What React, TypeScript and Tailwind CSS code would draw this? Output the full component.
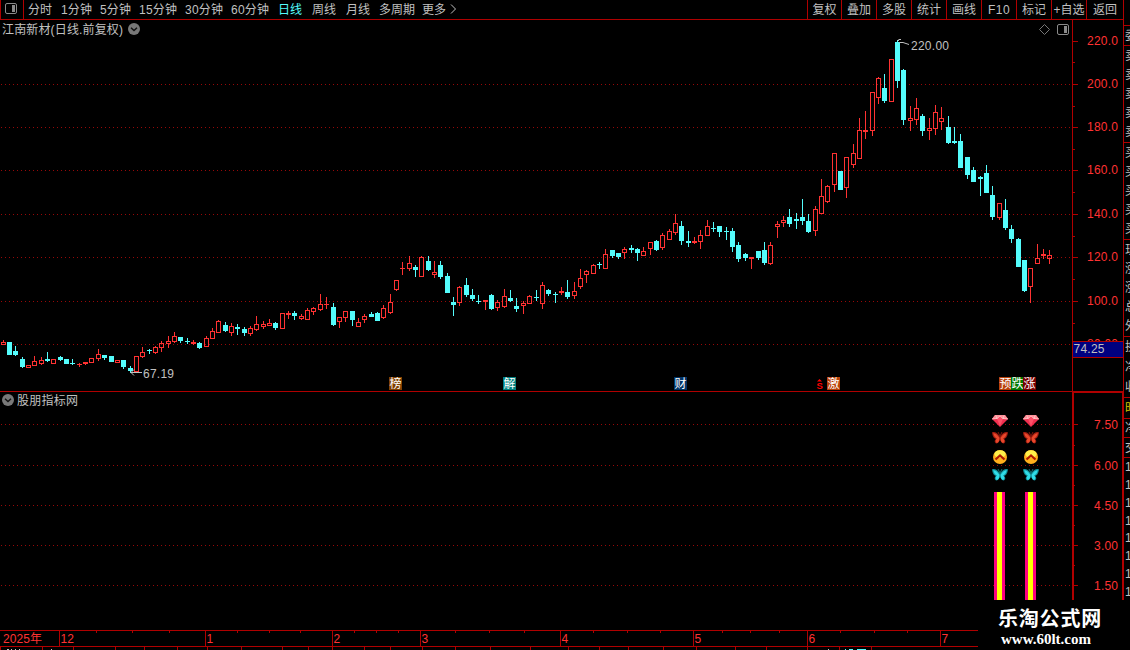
import React from "react";

type Candle = [number, number, number, number, number, 0 | 1];

// [centre x, high, body top, body bottom, low, rising]
const candles: Candle[] = [
  [3,340,342,345,345,1],[9,342,342,355,355,0],[15,346,351,355,356,0],[22,357,359,367,368,0],[28,365,365,368,368,1],
  [34,356,361,366,366,1],[41,357,360,364,365,1],[47,352,359,361,362,0],[53,359,359,364,364,1],[60,356,357,360,361,0],
  [66,359,359,364,364,0],[72,359,363,364,365,0],[79,363,364,365,367,1],[85,362,362,364,365,1],[91,358,358,363,363,1],
  [98,349,354,359,361,1],[104,355,355,358,360,0],[111,356,356,362,362,0],[117,360,360,363,363,1],[123,360,360,367,369,0],
  [130,366,368,371,373,0],[136,356,356,372,372,1],[142,347,352,357,358,1],[149,349,350,351,354,0],[155,346,347,353,354,1],
  [161,341,343,348,352,1],[168,336,341,344,348,1],[174,332,336,342,343,1],[180,337,337,341,343,0],[187,338,341,342,344,0],
  [193,340,342,344,345,1],[199,342,343,348,349,0],[206,336,338,347,347,1],[212,328,331,339,339,1],[218,320,321,333,333,1],
  [225,322,325,331,332,0],[231,323,326,333,336,1],[237,324,327,329,335,0],[244,327,329,333,336,0],[250,326,328,334,336,1],
  [256,316,324,330,331,1],[263,321,324,327,329,1],[269,319,323,326,326,1],[275,322,323,328,330,0],[282,313,313,329,329,1],
  [288,311,313,315,319,1],[294,311,313,316,320,0],[301,314,316,319,320,1],[307,308,310,320,320,1],[313,307,308,312,315,1],
  [320,294,304,310,311,1],[326,297,304,305,309,1],[333,303,307,325,326,0],[339,317,317,322,328,1],[345,311,311,318,322,1],
  [352,311,311,320,326,0],[358,318,322,327,327,1],[364,314,316,320,323,1],[371,312,314,317,317,0],[377,312,313,321,321,0],
  [383,305,308,318,319,1],[390,294,302,313,314,1],[396,280,280,290,291,1],[402,262,268,269,275,1],[409,256,263,269,271,1],
  [415,265,267,270,277,0],[421,256,257,277,277,1],[428,256,261,270,271,0],[434,261,272,275,278,1],[440,261,265,277,279,0],
  [447,273,276,293,293,0],[453,297,302,305,316,0],[459,286,287,303,306,1],[466,278,285,295,297,0],[472,289,295,299,301,0],
  [478,295,301,302,304,0],[485,300,300,302,310,1],[491,294,295,309,310,0],[497,300,302,308,311,1],[504,289,296,307,308,1],
  [510,290,298,301,302,0],[516,298,306,309,312,0],[523,301,303,306,314,1],[529,295,296,304,304,1],[536,290,297,298,301,0],
  [542,282,285,304,309,1],[548,289,290,294,296,0],[555,292,294,295,303,0],[561,287,291,293,295,1],[567,280,292,297,299,0],
  [574,282,291,296,299,1],[580,269,278,287,289,1],[586,270,271,275,283,1],[593,264,265,274,274,1],[599,262,264,265,269,0],
  [605,249,254,269,269,1],[612,250,250,256,258,0],[618,253,253,257,259,0],[624,247,249,253,259,1],[631,245,248,250,253,0],
  [637,248,249,253,261,0],[643,247,251,256,256,1],[650,242,242,249,255,1],[656,240,241,250,251,0],[662,233,235,248,250,1],
  [669,229,231,240,240,1],[675,214,223,233,235,1],[681,221,226,241,245,0],[688,231,241,243,247,0],[694,237,241,243,244,1],
  [700,230,235,242,249,1],[707,220,226,236,236,1],[713,222,228,229,232,0],[719,226,226,232,237,0],[726,227,231,232,240,0],
  [732,228,231,247,252,0],[738,242,245,259,262,0],[745,253,254,258,261,0],[751,257,257,259,269,1],[758,251,251,258,260,0],
  [764,242,250,263,265,0],[770,242,245,264,265,1],[777,221,224,227,238,1],[783,216,220,223,227,1],[789,209,217,224,227,0],
  [796,213,219,221,229,0],[802,199,217,221,225,0],[808,214,221,232,233,0],[815,206,209,231,236,1],[821,179,196,214,214,1],
  [827,185,186,202,203,1],[834,153,153,185,192,1],[840,171,171,190,190,0],[846,157,157,188,198,1],[853,144,153,165,168,1],
  [859,118,130,159,159,1],[865,111,130,132,139,1],[872,92,92,131,136,1],[878,77,78,98,104,1],[884,74,88,101,103,0],
  [891,59,59,102,102,1],[897,40,42,81,88,0],[903,69,70,120,125,0],[910,106,118,121,131,1],[916,98,108,120,125,1],
  [922,114,116,131,136,0],[929,118,128,131,140,1],[935,105,112,129,135,1],[941,107,118,122,130,1],[948,116,127,143,144,0],
  [954,127,141,143,144,0],[960,134,141,168,168,0],[967,157,157,175,179,0],[973,167,170,182,182,0],[980,176,177,179,196,0],
  [986,165,173,193,193,0],[992,186,195,217,220,0],[999,203,203,218,220,1],[1005,199,210,228,230,0],[1011,225,229,239,243,0],
  [1018,238,239,267,267,0],[1024,260,260,291,292,0],[1030,268,268,287,303,1],[1037,244,258,264,264,1],[1043,249,254,256,259,1],
  [1049,250,255,259,264,1],
];

function CandleShape({ c }: { c: Candle }) {
  const [x, high, top, bottom, low, up] = c;
  const color = up ? "#ff3232" : "#54fcfc";
  const solid = !up || bottom - top <= 2;
  return (
    <g fill={color}>
      {high < top && <rect x={x} y={high} width={1} height={top - high} />}
      {low > bottom && <rect x={x} y={bottom} width={1} height={low - bottom} />}
      {solid ? (
        <rect x={x - 2} y={top} width={5} height={bottom - top} />
      ) : (
        <rect x={x - 1.5} y={top + 0.5} width={4} height={bottom - top - 1} fill="none" stroke={color} />
      )}
    </g>
  );
}

const LINE = "#b00000";
const priceLabels: [string, number][] = [
  ["220.0", 41], ["200.0", 84], ["180.0", 127], ["160.0", 170], ["140.0", 214], ["120.0", 257], ["100.0", 301], ["80.00", 344],
];
const priceMinor = [62, 106, 149, 192, 236, 279, 323];
const indicatorLabels: [string, number][] = [["7.50", 424], ["6.00", 465], ["4.50", 505], ["3.00", 545], ["1.50", 585]];
const indicatorMinor = [445, 485, 525, 565];

const badges: [string, number, string][] = [
  ["榜", 389, "#7f3f00"], ["解", 503, "#008080"], ["财", 674, "#003366"], ["激", 827, "#b84008"],
  ["预", 999, "#b84008"], ["跌", 1011, "#007800"], ["涨", 1023, "#780000"],
];

const months: [string, number][] = [["12", 59], ["1", 205], ["2", 332], ["3", 420], ["4", 560], ["5", 693], ["6", 807], ["7", 940]];
const weeks = [96, 132, 169, 237, 269, 300, 354, 376, 398, 455, 489, 524, 593, 627, 660, 722, 750, 779, 840, 874, 907];
const lowerTicks = [0, 42, 73, 115, 144, 177, 207, 241, 282, 308, 332, 364, 390, 422, 455, 490, 530, 568, 599, 628, 663, 696, 735, 766, 807, 839, 871];

const periods: [string, number, number][] = [
  ["分时", 28, 24], ["1分钟", 61, 31], ["5分钟", 100, 31], ["15分钟", 139, 38], ["30分钟", 185, 38], ["60分钟", 231, 38],
  ["日线", 278, 24], ["周线", 312, 24], ["月线", 346, 24], ["多周期", 379, 36], ["更多", 422, 24],
];
const tools: [string, string][] = [
  ["复权", "w-[34px]"], ["叠加", "w-[35px]"], ["多股", "w-[35px]"], ["统计", "w-[35px]"], ["画线", "w-[35px]"],
  ["F10", "w-[35px] tracking-[0.5px]"], ["标记", "w-[35px]"], ["+自选", "w-[35px]"], ["返回", "w-[37px]"],
];

function PanelIcon() {
  return (
    <svg className="block" width="12" height="11" viewBox="0 0 12 11" fill="none">
      <rect x="0.5" y="0.5" width="11" height="10" rx="1.5" stroke="#8a8a8a" />
      <rect x="7" y="2" width="3" height="7" fill="#8a8a8a" />
    </svg>
  );
}

function Chevron() {
  return (
    <svg className="block" width="12" height="12" viewBox="0 0 12 12">
      <circle cx="6" cy="6" r="6" fill="#787878" />
      <path d="M3 4.8 6 7.6 9 4.8" fill="none" stroke="#111" strokeWidth="1.4" />
    </svg>
  );
}

function Butterfly({ x, y, main, dark }: { x: number; y: number; main: string; dark: string }) {
  return (
    <g transform={`translate(${x} ${y})`}>
      <path d="M8 6C5 1 2 .5 0 1.5 .5 4 1 7 4 8 2 9.500 2.500 12 4.500 12.500 6.500 12.500 7.500 10 8 8 8.500 10 9.500 12.500 11.500 12.500 13.500 12 14 9.500 12 8 15 7 15.500 4 16 1.500 14 .5 11 1 8 6Z" fill={dark} />
      <path d="M7.600 7C5 3 3 2 1.200 2.200 2 5 3 6.800 5 7.500 3 9 3.500 11.500 5 12 6.800 11.500 7.400 9.500 7.600 7ZM8.400 7C11 3 13 2 14.800 2.200 14 5 13 6.800 11 7.500 13 9 12.500 11.500 11 12 9.200 11.500 8.600 9.500 8.400 7Z" fill={main} />
      <path d="M6 1 8 5 10 1M8 5V10" fill="none" stroke={dark} strokeWidth=".8" />
    </g>
  );
}

function Signal({ x }: { x: number }) {
  return (
    <g>
      <g transform={`translate(${x - 8} 415)`}>
        <path d="M3 0H13L16 4 8 12 0 4Z" fill="#f03050" />
        <path d="M3 0H13L16 4H0Z" fill="#ff9098" />
        <path d="M5 4 8 1 11 4 8 11Z" fill="#ff5068" />
        <path d="M0 4 5 3.500 8 1 11 3.500 16 4M4 .5 5 4M12 .5 11 4" stroke="#ffd0d0" strokeWidth=".7" fill="none" />
      </g>
      <Butterfly x={x - 8} y={431} main="#e8482c" dark="#a01c10" />
      <g>
        <circle cx={x} cy={457} r={7} fill="#ffb01c" />
        <ellipse cx={x} cy={454} rx={5.500} ry={3.800} fill="#fff04a" />
        <path d={`M${x - 4.500} 459.500 ${x} 455.500 ${x + 4.500} 459.500`} fill="none" stroke="#b01800" strokeWidth={2.200} />
      </g>
      <Butterfly x={x - 8} y={468} main="#30dce8" dark="#109098" />
    </g>
  );
}

const chartFont = "font-['Liberation_Sans','Noto_Sans_CJK_SC',sans-serif]";

function PricePane() {
  return (
    <section className="flex h-[371px] flex-col">
      <div className="flex h-5 w-[1073px] items-start border-r border-[#b00000] pl-[2px] text-[#c0c0c0]">
        <svg className="block" width="122" height="18">
          <text x="0" y="13.5" textLength="121" fill="#c0c0c0" fontSize="12">江南新材(日线.前复权)</text>
        </svg>
        <span className="ml-1 mt-[3px]"><Chevron /></span>
        <span className="ml-auto mr-[3px] mt-1 flex items-center gap-[7px]">
          <svg className="block" width="11" height="11" viewBox="0 0 11 11"><path d="M5.500 .5 10.500 5.500 5.500 10.500 .5 5.500Z" fill="none" stroke="#777" /></svg>
          <PanelIcon />
        </span>
      </div>
      <svg className="block overflow-visible" width="1123" height="351" viewBox="0 40 1123 351">
        {priceLabels.slice(1).map(([t, y]) => (
          <line key={t} x1="1" x2="1072" y1={y + 0.5} y2={y + 0.5} stroke="#980808" strokeDasharray="1 3" />
        ))}
        <rect x="1072" y="40" width="1" height="351" fill={LINE} />
        {priceLabels.map(([t, y]) => (
          <g key={t}>
            <rect x="1073" y={y} width="5" height="1" fill={LINE} />
            <text x="1087" y={y + 4} textLength="31" fill="#ff3232" fontSize="12">{t}</text>
          </g>
        ))}
        {priceMinor.map((y) => <rect key={y} x="1073" y={y} width="2" height="1" fill={LINE} />)}
        <g>{candles.map((c) => <CandleShape key={c[0]} c={c} />)}</g>
        <path d="M898.500 39.500H901M897.500 40.500H899M899 42.500 903 42.500 909 44.500" fill="none" stroke="#c0c0c0" />
        <text x="911" y="50" textLength="38" fill="#c0c0c0" fontSize="12">220.00</text>
        <path d="M142 372.500H131M134 369.500 131 372.500 134 375.500" fill="none" stroke="#c0c0c0" />
        <text x="143" y="378" textLength="31" fill="#c0c0c0" fontSize="12">67.19</text>
        {badges.map(([t, x, bg]) => (
          <g key={t}>
            <rect x={x} y="377" width="13" height="13" fill={bg} />
            <text x={x + 0.5} y="388" fill="#fff" fontSize="12">{t}</text>
          </g>
        ))}
        <text x="816.5" y="389" fill="#f00" fontSize="9.500" fontWeight="bold">S</text>
        <path d="M817 381.500 819.500 379 822 381.500Z" fill="#f00" />
        <rect x="1073" y="341" width="50" height="17" fill={LINE} />
        <rect x="1073" y="342" width="50" height="15" fill="#000080" />
        <text x="1073.5" y="353" textLength="31" fill="#c0c0c0" fontSize="12">74.25</text>
      </svg>
    </section>
  );
}

function IndicatorPane() {
  return (
    <section className="flex h-[239px] flex-col border-t border-[#b00000]">
      <div className="flex h-4 items-center gap-[3px] pl-[2px]">
        <Chevron />
        <svg className="block" width="62" height="16"><text x="0" y="12.500" textLength="61" fill="#c0c0c0" fontSize="12">股朋指标网</text></svg>
      </div>
      <svg className="block overflow-visible" width="1123" height="222" viewBox="0 408 1123 222">
        {indicatorLabels.map(([t, y]) => (
          <g key={t}>
            <line x1="1" x2="1072" y1={y + 0.5} y2={y + 0.5} stroke="#980808" strokeDasharray="1 3" />
            <rect x="1074" y={y} width="4" height="1" fill={LINE} />
            <text x="1094" y={y + 4.5} textLength="24" fill="#ff3232" fontSize="12">{t}</text>
          </g>
        ))}
        {indicatorMinor.map((y) => <rect key={y} x="1074" y={y} width="1" height="1" fill={LINE} />)}
        <path d="M1073 630V392H1123V630" fill="none" stroke={LINE} strokeWidth="2" />
        {[994, 1025].map((x) => (
          <g key={x}>
            <rect x={x} y="492" width="11" height="108" fill="#ff0080" />
            <rect x={x + 3} y="492" width="5" height="108" fill="#ff0" />
          </g>
        ))}
        <Signal x={1000} />
        <Signal x={1031} />
      </svg>
    </section>
  );
}

function Timeline() {
  return (
    <svg className="block" width="1123" height="20" viewBox="0 630 1123 20">
      <rect x="0" y="630" width="1123" height="1" fill={LINE} />
      <rect x="0" y="646" width="1123" height="1" fill={LINE} />
      <text x="3" y="643" textLength="39" fill="#ff3232" fontSize="12">2025年</text>
      {months.map(([t, x]) => (
        <g key={t}>
          <rect x={x} y="630" width="1" height="16" fill={LINE} />
          <text x={x + 1.500} y="643" fill="#ff3232" fontSize="12">{t}</text>
        </g>
      ))}
      {weeks.map((x) => <rect key={x} x={x} y="631" width="1" height="2" fill={LINE} />)}
      {lowerTicks.map((x) => <rect key={x} x={x} y="647" width="1" height="3" fill={LINE} />)}
      <path d="M7 649.500H9M11 649.500H12M15 649.500H16M19 649.500H20M51 649.500H52M828 649.500H829" stroke="#c0c0c0" />
      <path d="M845 649.500H846M849 649.500H853M857 649.500H866" stroke="#54fcfc" />
    </svg>
  );
}

function QuoteGroup({ chars, height, color = "text-[#c0c0c0]" }: { chars: string; height: string; color?: string }) {
  return (
    <div className={`flex shrink-0 flex-col justify-around border-t border-[#b00000] pl-px ${height} ${color}`}>
      {Array.from(chars).map((t, i) => <span key={i} className="block w-3 leading-3">{t}</span>)}
    </div>
  );
}

function QuoteStrip() {
  return (
    <aside className="flex w-[6px] flex-col overflow-hidden pt-[25px] text-[12px]">
      <QuoteGroup chars="委" height="h-5" />
      <QuoteGroup chars="卖卖卖卖卖" height="h-[97px]" />
      <QuoteGroup chars="买买买买买" height="h-[97px]" />
      <QuoteGroup chars="现涨涨总外" height="h-[97px]" />
      <QuoteGroup chars="换净收" height="h-[61px]" />
      <QuoteGroup chars="时" height="h-[21px]" color="text-[#d0c800]" />
      <QuoteGroup chars="净" height="h-[19px]" />
      <QuoteGroup chars="交" height="h-5" />
      <QuoteGroup chars="11111111" height="h-[144px]" />
    </aside>
  );
}

export default function App() {
  return (
    <div className={`relative flex h-[650px] w-[1130px] overflow-hidden bg-black ${chartFont}`}>
      <main className="flex w-[1124px] shrink-0 flex-col border-r border-[#b00000]">
        <header className="flex h-5 shrink-0 border-b border-[#b00000] text-[12px] leading-[20px] text-[#c0c0c0]">
          <div className="flex w-6 items-start border-x border-[#b00000] pl-1 pt-[3px]"><PanelIcon /></div>
          <svg width="783" height="19" viewBox="24 0 783 19">
            {periods.map(([t, x, w]) => (
              <text key={t} x={x} y="13.500" textLength={w} fill={t === "日线" ? "#54fcfc" : "#c0c0c0"} fontSize="12">{t}</text>
            ))}
            <path d="M451 4.500 455.500 9 451 13.500" fill="none" stroke="#c0c0c0" />
          </svg>
          {tools.map(([t, w]) => (
            <button key={t} className={`${w} shrink-0 whitespace-nowrap border-l border-[#b00000] text-center`}>{t}</button>
          ))}
        </header>
        <PricePane />
        <IndicatorPane />
        <Timeline />
      </main>
      <QuoteStrip />
      <div className="absolute bottom-0 right-0 flex h-[50px] w-[152px] flex-col bg-black pl-5 pt-[7px] text-white">
        <span className="text-[20px] font-bold leading-6 tracking-[0.8px]">乐淘公式网</span>
        <span className="pl-[3px] font-['Liberation_Serif',serif] text-[15px] font-bold leading-4">www.60lt.com</span>
      </div>
    </div>
  );
}
